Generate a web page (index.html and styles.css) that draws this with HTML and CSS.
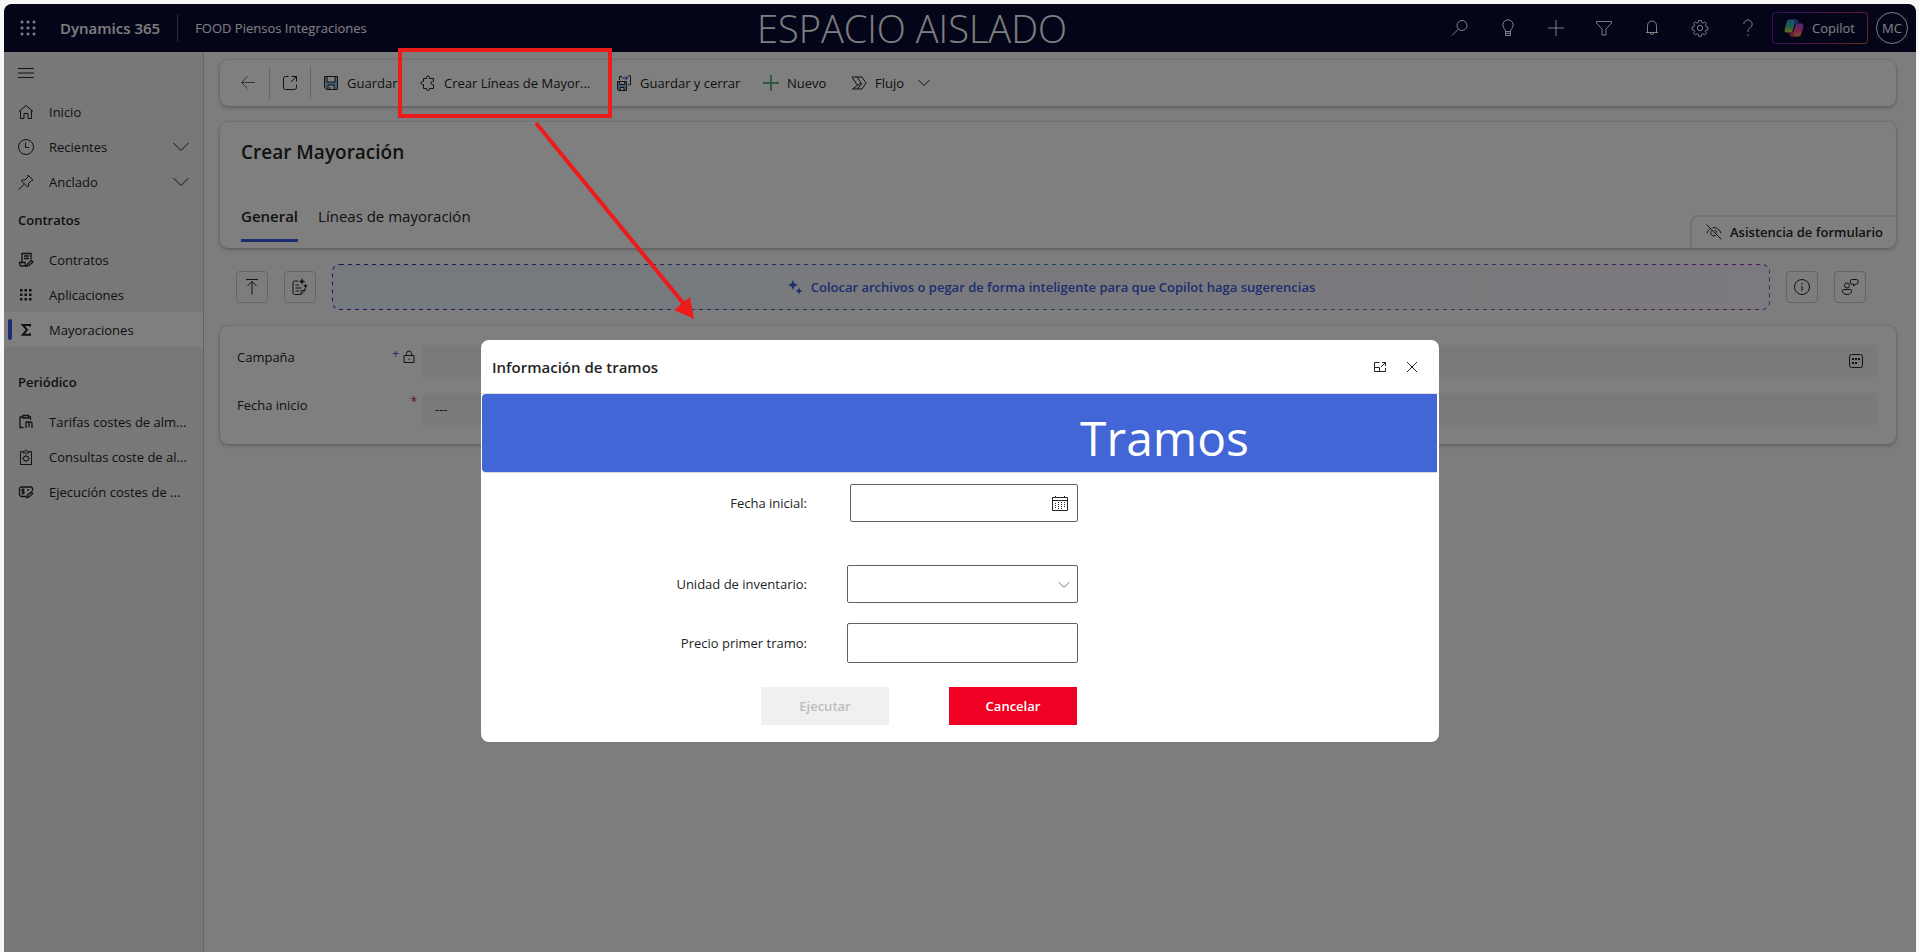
FILE: index.html
```html
<!DOCTYPE html>
<html lang="es">

<head>
    <meta charset="UTF-8">
    <meta name="viewport" content="width=device-width, initial-scale=1.0">
    <title>Crear Mayoración - Dynamics 365</title>
    <link rel="stylesheet" href="styles.css">
</head>

<body>
    <div class="app">

        <header class="topbar">
            <button class="icon-btn waffle" aria-label="Aplicaciones">
                <svg width="16" height="16" viewBox="0 0 16 16" fill="currentColor">
                    <circle cx="2" cy="2" r="1.5"/><circle cx="8" cy="2" r="1.5"/><circle cx="14" cy="2" r="1.5"/>
                    <circle cx="2" cy="8" r="1.5"/><circle cx="8" cy="8" r="1.5"/><circle cx="14" cy="8" r="1.5"/>
                    <circle cx="2" cy="14" r="1.5"/><circle cx="8" cy="14" r="1.5"/><circle cx="14" cy="14" r="1.5"/>
                </svg>
            </button>
            <a href="#" class="brand">Dynamics 365</a>
            <a href="#" class="app-name">FOOD Piensos Integraciones</a>
            <span class="env-name">ESPACIO AISLADO</span>

            <div class="top-actions">
                <button class="icon-btn" aria-label="Buscar">
                    <svg width="18" height="18" viewBox="0 0 18 18"><circle cx="11" cy="6.5" r="5"/><path d="M7.3 10.2L1 16.5"/></svg>
                </button>
                <button class="icon-btn" aria-label="Sugerencias">
                    <svg width="18" height="18" viewBox="0 0 18 18"><path d="M6.5 12.5C6.5 9.5 3.8 9.3 3.8 6a5.2 5.2 0 0 1 10.4 0c0 3.3-2.7 3.5-2.7 6.5zM6.5 12.5v4h5v-4M6.5 14.3h5"/></svg>
                </button>
                <button class="icon-btn" aria-label="Nuevo">
                    <svg width="18" height="18" viewBox="0 0 18 18"><path d="M9 1v16M1 9h16"/></svg>
                </button>
                <button class="icon-btn" aria-label="Filtro">
                    <svg width="18" height="18" viewBox="0 0 18 18"><path d="M1.5 2.5h15v1.5L11 10v6H7v-6L1.5 4z"/></svg>
                </button>
                <button class="icon-btn" aria-label="Notificaciones">
                    <svg width="18" height="18" viewBox="0 0 18 18"><path d="M4.5 13.500V6.500a4.500 4.500 0 0 1 9 0v7M3 13.500h12M7.300 13.800a1.700 1.700 0 0 0 3.400 0"/></svg>
                </button>
                <button class="icon-btn" aria-label="Configuración">
                    <svg width="18" height="18" viewBox="0 0 18 18"><circle cx="9" cy="9" r="2.7"/><path d="M7.7 1.5h2.600l.4 2 1.300.6 1.800-1.200 1.700 1.700-1.200 1.800.6 1.300 2 .4v2.600l-2 .4-.6 1.300 1.200 1.800-1.700 1.700-1.800-1.200-1.300.6-.4 2H7.700l-.4-2-1.300-.6-1.800 1.200-1.700-1.700 1.200-1.800-.6-1.300-2-.4V8.100l2-.4.6-1.300-1.200-1.800 1.700-1.700L6 4.100l1.300-.6z"/></svg>
                </button>
                <button class="icon-btn" aria-label="Ayuda">
                    <svg width="18" height="18" viewBox="0 0 18 18"><path d="M4.8 5.2a4.200 4.200 0 1 1 6.600 3.400C9.800 9.800 9 10.500 9 13M9 15.300v1.700"/></svg>
                </button>
                <button class="copilot-btn">
                    <svg class="filled" width="20" height="20" viewBox="0 0 20 20">
                        <defs>
                            <linearGradient id="cpA" x1="0" y1="0" x2="0" y2="1">
                                <stop offset="0" stop-color="#3a9cf0"/><stop offset=".5" stop-color="#35c0a0"/><stop offset="1" stop-color="#f0d030"/>
                            </linearGradient>
                            <linearGradient id="cpB" x1="0" y1="0" x2="0" y2="1">
                                <stop offset="0" stop-color="#9a50e8"/><stop offset=".5" stop-color="#f04090"/><stop offset="1" stop-color="#ffa050"/>
                            </linearGradient>
                        </defs>
                        <path fill="url(#cpA)" d="M5.5 1.5h6.5L8.5 13c-.3 1-1 1.5-2 1.5H3C.8 14.5.2 12.800.7 11l2-7c.5-1.700 1.300-2.500 2.800-2.500z"/>
                        <path fill="url(#cpB)" d="M14.5 18.5H8L11.500 7c.3-1 1-1.500 2-1.500H17c2.200 0 2.800 1.700 2.300 3.500l-2 7c-.5 1.700-1.300 2.500-2.800 2.500z"/>
                        <path fill="#3a50d0" d="M9.500 1.500h2.800c1.200 0 1.800.7 2.100 1.800l.7 2.200h-1.600c-1 0-1.700.5-2 1.500z"/>
                        <path fill="#d04060" d="M10.500 18.500H7.700c-1.200 0-1.800-.7-2.100-1.800l-.7-2.200h1.600c1 0 1.700-.5 2-1.500z"/>
                    </svg>
                    Copilot
                </button>
                <button class="avatar">MC</button>
            </div>
        </header>

        <div class="body">
            <nav class="sidebar">
                <button class="icon-btn menu-btn" aria-label="Menú">
                    <svg width="16" height="10" viewBox="0 0 16 10"><path d="M0 .5h16M0 5h16M0 9.500h16"/></svg>
                </button>

                <a href="#" class="nav-item">
                    <svg width="16" height="16" viewBox="0 0 16 16"><path d="M1 7.500L8 1.500l7 6M2.500 6.500v8h3.500v-5h4v5h3.500v-8"/></svg>
                    <span>Inicio</span>
                </a>
                <a href="#" class="nav-item">
                    <svg width="16" height="16" viewBox="0 0 16 16"><circle cx="8" cy="8" r="7.500"/><path d="M7.500 3.500v5H11"/></svg>
                    <span>Recientes</span>
                    <svg class="chevron" width="16" height="10" viewBox="0 0 16 10"><path d="M.5 1l7.500 7.500L15.500 1"/></svg>
                </a>
                <a href="#" class="nav-item">
                    <svg width="16" height="16" viewBox="0 0 16 16"><path d="M10 1l5 5-1.500.5-3 3 .2 2.500-1.200 1L3.500 7l1-1.200 2.500.2 3-3zM6.500 10L.8 15.500"/></svg>
                    <span>Anclado</span>
                    <svg class="chevron" width="16" height="10" viewBox="0 0 16 10"><path d="M.5 1l7.500 7.500L15.500 1"/></svg>
                </a>

                <h2 class="nav-group">Contratos</h2>
                <a href="#" class="nav-item">
                    <svg class="medium" width="16" height="16" viewBox="0 0 16 16"><path d="M4 10V1.500h9V7.500M6 4h5M6 6.500h5M1.500 10.500h5.500c0 2 .5 3 1.500 3.500H3.500c-1.500 0-2-1-2-3.500z"/><path d="M9 14l.5-2 4-3.500 1.500 1.500-4 3.500z"/></svg>
                    <span>Contratos</span>
                </a>
                <a href="#" class="nav-item">
                    <svg class="filled" width="16" height="16" viewBox="0 0 16 16"><path d="M2 2h2.500v2.500H2zM6.500 2H9v2.500H6.500zM11 2h2.500v2.500H11zM2 6.500h2.500V9H2zM6.500 6.500H9V9H6.500zM11 6.500h2.500V9H11zM2 11h2.500v2.500H2zM6.500 11H9v2.500H6.500zM11 11h2.500v2.500H11z"/></svg>
                    <span>Aplicaciones</span>
                </a>
                <a href="#" class="nav-item selected">
                    <svg class="heavy" width="16" height="16" viewBox="0 0 16 16"><path d="M12 4.500V3H4.800L9 7.800l-4.200 5H12v-1.500"/></svg>
                    <span>Mayoraciones</span>
                </a>

                <h2 class="nav-group spaced">Periódico</h2>
                <a href="#" class="nav-item">
                    <svg class="medium" width="16" height="16" viewBox="0 0 16 16"><path d="M5 3H2v10.500h3.500M10.500 3h2v3M5 1.500h5.500v2.500H5zM8 14V7.500M8 8h4.500c1 0 1.500.7 1.500 1.500V14M11 8v5"/></svg>
                    <span>Tarifas costes de alm...</span>
                </a>
                <a href="#" class="nav-item">
                    <svg width="16" height="16" viewBox="0 0 16 16"><path d="M4.500 2.500H2.500v13h11v-13h-2M5 4V2.500h1.500L8 .8l1.500 1.700H11V4z"/><circle cx="8" cy="9.500" r="2.500"/><path d="M8 5.800V7M8 12v1.200M4.300 9.500h1.200M10.500 9.500h1.200M5.400 6.900l.8.800M9.800 11.300l.8.800M10.600 6.900l-.8.800M6.200 11.300l-.8.800"/></svg>
                    <span>Consultas coste de al...</span>
                </a>
                <a href="#" class="nav-item">
                    <svg class="medium" width="16" height="16" viewBox="0 0 16 16"><path d="M8 12.500H3.500a2 2 0 0 1-2-2V5a2 2 0 0 1 2-2h9a2 2 0 0 1 2 2v2M6.500 5.500H5c-1.500 0-1.500 2 0 2s1.500 2.200 0 2.200H3.500M5 4.500v6M9 6h2M8.800 13.500l.7-2.500 4-3 1.200 1.500-3.700 3.500z"/></svg>
                    <span>Ejecución costes de ...</span>
                </a>
            </nav>

            <main class="content">
                <div class="card toolbar">
                    <button class="tool back" aria-label="Atrás">
                        <svg width="16" height="16" viewBox="0 0 16 16"><path d="M15 7.500H1.500M7.500 1.500l-6 6 6 6"/></svg>
                    </button>
                    <button class="tool popout" aria-label="Abrir en una ventana nueva">
                        <svg width="16" height="16" viewBox="0 0 16 16"><path d="M6.500 1.500h-3a2 2 0 0 0-2 2v9a2 2 0 0 0 2 2h9a2 2 0 0 0 2-2v-3M9.500 1.500h5v5M14.500 1.500L9 7"/></svg>
                    </button>
                    <button class="tool save">
                        <svg width="16" height="16" viewBox="0 0 16 16"><path class="disk" d="M1.500 1.500h13v13h-11l-2-2z"/><path class="paper" d="M4 1.500h8v5.500H4zM5 10h6v4.500H5z"/><path d="M7 12v2"/></svg>
                        Guardar
                    </button>
                    <button class="tool lines">
                        <svg width="16" height="16" viewBox="0 0 16 16"><path d="M3.500 3.500H6.500V2.500a1.500 1.500 0 0 1 3 0v1H13.500V6.500H12.500a1.500 1.500 0 0 0 0 3h1V13.500H9.500v.5a1.500 1.500 0 0 1-3 0v-.5H3.500V9.500H2.500a1.500 1.500 0 0 1 0-3h1z"/></svg>
                        Crear Líneas de Mayor...
                    </button>
                    <button class="tool save-close">
                        <svg width="16" height="16" viewBox="0 0 16 16"><path d="M3.500 5V1.500H6M12 .8h2.500v9H12"/><path class="disk" d="M1.500 6.500h9v9H2.500l-1-1z"/><path class="paper" d="M3.500 6.500h5v3h-5zM4 12.500h4v3H4z"/><path class="arrow-blue" d="M5.500 3h6M9.500 1l2 2-2 2"/></svg>
                        Guardar y cerrar
                    </button>
                    <button class="tool new">
                        <svg class="green" width="16" height="16" viewBox="0 0 16 16"><path d="M8 0v16M0 8h16"/></svg>
                        Nuevo
                    </button>
                    <button class="tool flow">
                        <svg width="16" height="16" viewBox="0 0 16 16"><path d="M1 2h10l4 6-4 6H1.500L10 8 6 2M1 2l5.500 8.500M6.500 14l4.500-6"/></svg>
                        Flujo
                        <svg class="thin" width="12" height="8" viewBox="0 0 12 8"><path d="M.5 1L6 6.500 11.500 1"/></svg>
                    </button>
                </div>

                <section class="card form-header">
                    <h1>Crear Mayoración</h1>
                    <div class="tabs">
                        <button class="tab active">General</button>
                        <button class="tab">Líneas de mayoración</button>
                    </div>
                    <button class="assist">
                        <svg width="16" height="16" viewBox="0 0 16 16"><path d="M.5.5l15 15M1 9.500c.5-2.500 1.800-4 3.500-5M6.500 3.700c4-.6 7.500 1.800 8.500 5.800M6 6.500a3 3 0 1 0 4.200 4.200M8.500 6.200a3 3 0 0 1 2.400 2.600"/></svg>
                        Asistencia de formulario
                    </button>
                </section>

                <div class="copilot-row">
                    <button class="square-btn" aria-label="Subir">
                        <svg width="16" height="18" viewBox="0 0 16 18"><path d="M2 1.500h12M8 16.500v-13M3.500 8L8 3.500 12.500 8"/></svg>
                    </button>
                    <button class="square-btn" aria-label="Rellenar con Copilot">
                        <svg width="18" height="18" viewBox="0 0 18 18"><path d="M7 3H3.500c-.7 0-1.500.5-1.500 1.300v11c0 .7.7 1.200 1.500 1.200H10l4-4V10M10 16.500V12.500h4M4.500 7H8M4.500 10h6M4.500 13H8"/><path class="solid" d="M11 0l.9 2.600 2.600.9-2.600.9L11 7l-.9-2.600-2.600-.9 2.600-.9zM14.500 5.500l.8 1.700 1.700.8-1.700.8-.8 1.700-.8-1.700L12 8l1.700-.8z"/></svg>
                    </button>
                    <button class="drop-zone">
                        <svg class="drop-border" aria-hidden="true">
                            <defs>
                                <linearGradient id="dashes" x1="0" x2="1">
                                    <stop offset="0" stop-color="#5a20c0"/><stop offset=".25" stop-color="#4058c8"/><stop offset=".55" stop-color="#3a90c0"/><stop offset=".75" stop-color="#6078c8"/><stop offset="1" stop-color="#a030c0"/>
                                </linearGradient>
                            </defs>
                            <rect width="100%" height="100%" rx="8" stroke="url(#dashes)"/>
                        </svg>
                        <svg class="filled" width="16" height="16" viewBox="0 0 16 16"><path d="M6 1l1.500 3.500L11 6 7.500 7.500 6 11 4.500 7.500 1 6l3.500-1.500zM12 8.500l1.100 2.400 2.400 1.100-2.400 1.100L12 15.500l-1.100-2.400L8.500 12l2.400-1.100z"/></svg>
                        Colocar archivos o pegar de forma inteligente para que Copilot haga sugerencias
                    </button>
                    <button class="square-btn" aria-label="Información">
                        <svg width="18" height="18" viewBox="0 0 18 18"><circle cx="9" cy="9" r="7.500"/><path d="M9 8v5M9 5v1.500"/></svg>
                    </button>
                    <button class="square-btn" aria-label="Comentarios">
                        <svg width="18" height="18" viewBox="0 0 18 18"><circle cx="6" cy="7.500" r="2.500"/><path d="M2.500 11.500h7.200c.6 0 1 .4 1 1 0 2.500-2 4-4.700 4s-4.700-1.500-4.700-4c0-.6.500-1 1.200-1zM10.500 1.500h5c.8 0 1.500.5 1.500 1.300v2c0 .8-.6 1.200-1.500 1.200H15l-2.500 2V6h-2c-.6 0-1.200-.5-1.200-1.200v-2c0-.8.500-1.300 1.200-1.300z"/></svg>
                    </button>
                </div>

                <section class="card form-body">
                    <div class="field">
                        <label for="campana">Campaña</label>
                        <span class="mark recommended">+</span>
                        <svg width="12" height="14" viewBox="0 0 12 14"><path d="M1 5.500h10v7H1zM3.500 5.500V3.500a2.500 2.500 0 0 1 5 0v2M6 8.500v1.500"/></svg>
                        <div class="value">
                            <input id="campana" type="text" readonly>
                            <svg width="14" height="14" viewBox="0 0 14 14"><rect x=".5" y=".5" width="13" height="13" rx="2"/><path class="solid" d="M3 4h2v2H3zM6 4h2v2H6zM9 4h2v2H9zM3 8h2v2H3zM6 8h2v2H6z"/></svg>
                        </div>
                    </div>
                    <div class="field">
                        <label for="fechaInicio">Fecha inicio</label>
                        <span class="mark required">*</span>
                        <div class="value">
                            <input id="fechaInicio" type="text" placeholder="---">
                        </div>
                    </div>
                </section>
            </main>
        </div>

        <div class="overlay">
            <div class="dialog" role="dialog" aria-labelledby="dialogTitle">
                <div class="dialog-header">
                    <h2 id="dialogTitle">Información de tramos</h2>
                    <button class="icon-btn" aria-label="Expandir">
                        <svg width="14" height="12" viewBox="0 0 14 12"><path d="M6.500 1.500h-5v9h11V7M1.500 6.500h5v4M9 1.500h3.500V5M12.500 1.500L8 6"/></svg>
                    </button>
                    <button class="icon-btn" aria-label="Cerrar">
                        <svg width="12" height="12" viewBox="0 0 12 12"><path d="M1 1l10 10M11 1L1 11"/></svg>
                    </button>
                </div>
                <div class="banner">Tramos</div>
                <form class="dialog-form">
                    <div class="form-row date-row">
                        <label for="fechaInicial">Fecha inicial:</label>
                        <div class="control date">
                            <input id="fechaInicial" type="text">
                            <svg width="18" height="18" viewBox="0 0 18 18"><path d="M1.500 2.500h15v13h-15zM1.500 5.500h15M4.500 1v2M13.500 1v2"/><path class="dots" d="M4.500 8v6M7.500 7v7M10.500 7v7M13.500 7v5"/></svg>
                        </div>
                    </div>
                    <div class="form-row unit-row">
                        <label for="unidad">Unidad de inventario:</label>
                        <div class="control">
                            <select id="unidad"><option></option></select>
                            <svg class="grey" width="12" height="8" viewBox="0 0 12 8"><path d="M.5 1L6 6.500 11.500 1"/></svg>
                        </div>
                    </div>
                    <div class="form-row">
                        <label for="precio">Precio primer tramo:</label>
                        <div class="control price">
                            <input id="precio" type="text">
                        </div>
                    </div>
                    <div class="buttons">
                        <button type="button" class="run" disabled>Ejecutar</button>
                        <button type="button" class="cancel">Cancelar</button>
                    </div>
                </form>
            </div>
        </div>
    </div>

    <!-- callout: toolbar command opens the dialog -->
    <div class="highlight"></div>
    <svg class="arrow" width="170" height="205" viewBox="0 0 170 205">
        <path d="M4 3L152 184" stroke="#ec1c1c" stroke-width="4"/>
        <path d="M162 199l-20-9 16-13z" fill="#ec1c1c"/>
    </svg>
</body>

</html>
```

FILE: styles.css
```css
* {
    box-sizing: border-box;
}

body {
    margin: 0;
    padding: 4px 3px 0 4px;
    height: 100vh;
    background-color: #f7f7f7;
    font-family: "Open Sans", "Noto Sans", sans-serif;
    font-size: 13px;
    line-height: 20px;
    color: #242424;
    overflow: hidden;
}

button,
input,
select {
    font: inherit;
    color: inherit;
    background: none;
    border: none;
    padding: 0;
    margin: 0;
}

button {
    cursor: pointer;
}

a {
    color: inherit;
    text-decoration: none;
}

h1,
h2 {
    margin: 0;
}

svg {
    flex: none;
    fill: none;
    stroke: currentColor;
    stroke-width: 1;
}

svg.filled,
.solid {
    fill: currentColor;
    stroke: none;
}

svg.medium {
    stroke-width: 1.3;
}

svg.heavy {
    stroke-width: 2;
}

.app {
    position: relative;
    display: flex;
    flex-direction: column;
    height: 100%;
}

.icon-btn {
    display: flex;
    align-items: center;
    justify-content: center;
}

/* top bar */
.topbar {
    display: flex;
    align-items: center;
    height: 48px;
    flex: none;
    position: relative;
    padding-right: 8px;
    border-radius: 8px 8px 0 0;
    background-color: #0b0b34;
    color: #fff;
}

.waffle {
    width: 48px;
    height: 48px;
}

.waffle svg {
    fill: currentColor;
    stroke: none;
}

.brand {
    padding: 4px 17px 4px 8px;
    border-right: 1px solid #56567a;
    font-size: 15px;
    font-weight: 600;
}

.app-name {
    padding-left: 17px;
}

.env-name {
    position: absolute;
    left: 50%;
    transform: translateX(-50%);
    margin-left: -48px;
    font-size: 38px;
    font-weight: 300;
    line-height: 48px;
    white-space: nowrap;
}

.top-actions {
    display: flex;
    align-items: center;
    margin-left: auto;
}

.top-actions .icon-btn {
    width: 48px;
    height: 48px;
}

.copilot-btn {
    display: flex;
    align-items: center;
    gap: 8px;
    height: 32px;
    width: 96px;
    padding-left: 11px;
    border: 1px solid transparent;
    border-radius: 4px;
    background: linear-gradient(#0b0b34, #0b0b34) padding-box,
        linear-gradient(120deg, #6a18d0, #b01888 60%, #c07020) border-box;
}

.avatar {
    width: 32px;
    height: 32px;
    margin-left: 8px;
    border: 1px solid #fff;
    border-radius: 50%;
}

/* side navigation */
.body {
    flex: 1;
    display: flex;
    background-color: #fafafa;
}

.sidebar {
    width: 200px;
    flex: none;
    background-color: #f0f0f0;
    border-right: 1px solid #c8c8c8;
}

.menu-btn {
    height: 42px;
    padding-left: 14px;
}

.nav-item {
    display: flex;
    align-items: center;
    gap: 15px;
    height: 35px;
    padding: 0 14px;
    white-space: nowrap;
}

.nav-item.selected {
    position: relative;
    background-color: #fff;
}

.nav-item.selected::before {
    content: "";
    position: absolute;
    left: 4px;
    top: 7px;
    width: 4px;
    height: 21px;
    border-radius: 2px;
    background-color: #3b5bdb;
}

.chevron {
    margin-left: auto;
}

.nav-group {
    height: 43px;
    padding-left: 14px;
    font-size: 13px;
    font-weight: 600;
    line-height: 43px;
}

.nav-group.spaced {
    margin-top: 14px;
}

/* main area */
.content {
    flex: 1;
    padding: 8px 20px 0 16px;
}

.card {
    background-color: #fff;
    border-radius: 8px;
    box-shadow: 0 0 2px rgba(0, 0, 0, 0.24), 0 2px 4px rgba(0, 0, 0, 0.2);
}

.toolbar {
    display: flex;
    align-items: center;
    height: 46px;
    padding-left: 8px;
}

.tool {
    display: flex;
    align-items: center;
    gap: 8px;
    height: 32px;
    padding: 0 12px;
    white-space: nowrap;
}

.tool.back,
.tool.popout {
    width: 41px;
    border-right: 1px solid #c8c8c8;
}

.tool.back {
    width: 42px;
    color: #666;
}

.tool.save {
    width: 97px;
}

.tool.lines {
    width: 196px;
}

.tool.save-close {
    width: 147px;
}

.tool.new {
    width: 88px;
}

.tool.flow .thin {
    margin-left: 6px;
}

.disk {
    fill: #88bce8;
}

.paper {
    fill: #fff;
}

.green {
    color: #30a060;
    stroke-width: 1.5;
}

.arrow-blue {
    stroke: #3040c0;
}

.form-header {
    position: relative;
    display: flex;
    flex-direction: column;
    justify-content: space-between;
    height: 126px;
    margin-top: 16px;
    padding: 18px 21px 6px;
}

.form-header h1 {
    font-size: 19px;
    font-weight: 600;
    line-height: 24px;
}

.tabs {
    display: flex;
    gap: 20px;
}

.tab {
    padding: 7px 0 12px;
    font-size: 15px;
    line-height: 22px;
    border-bottom: 3px solid transparent;
}

.tab.active {
    font-weight: 600;
    border-color: #3b5bdb;
}

.assist {
    position: absolute;
    right: 0;
    bottom: 0;
    display: flex;
    align-items: center;
    gap: 8px;
    height: 33px;
    padding: 0 13px 2px 14px;
    border: 1px solid #e4e4e4;
    border-width: 2px 0 0 2px;
    border-top-left-radius: 8px;
    font-weight: 600;
}

.copilot-row {
    display: flex;
    align-items: center;
    gap: 16px;
    padding: 16px 30px 16px 16px;
}

.square-btn {
    display: flex;
    align-items: center;
    justify-content: center;
    width: 32px;
    height: 32px;
    border: 1px solid #c8c8c8;
    border-radius: 4px;
}

.drop-zone {
    position: relative;
    flex: 1;
    display: flex;
    align-items: center;
    justify-content: center;
    gap: 8px;
    height: 46px;
    border-radius: 8px;
    background: linear-gradient(90deg, #e8f4fa, #f2f4fc 40%, #f8f2fa 80%, #f6f4fc);
    color: #3b5bdb;
    font-weight: 600;
}

.drop-border {
    position: absolute;
    inset: 0;
    width: 100%;
    height: 100%;
    border-radius: 8px;
    stroke-width: 2;
    stroke-dasharray: 4 4;
}

.form-body {
    display: flex;
    flex-direction: column;
    gap: 16px;
    padding: 19px 19px 19px 17px;
}

.field {
    display: flex;
    gap: 4px;
}

.field label {
    flex: 1;
    line-height: 24px;
}

.mark {
    font-size: 12px;
    line-height: 18px;
}

.recommended {
    color: #3b5bdb;
}

.required {
    color: #c4122f;
}

.field > svg {
    margin: 5px 2px 0 0;
}

.value {
    display: flex;
    align-items: center;
    width: calc(100% - 184px);
    height: 32px;
    padding: 0 14px;
    border-radius: 4px;
    background-color: #f4f4f4;
}

.value input {
    flex: 1;
    min-width: 0;
}

.value input::placeholder {
    color: #242424;
}

/* dialog */
.overlay {
    position: absolute;
    inset: 0;
    display: flex;
    justify-content: center;
    align-items: flex-start;
    padding-top: 336px;
    border-radius: 8px 8px 0 0;
    background-color: rgba(0, 0, 0, 0.5);
}

.dialog {
    width: 100%;
    max-width: 958px;
    border-radius: 8px;
    background-color: #fff;
}

.dialog-header {
    display: flex;
    align-items: center;
    height: 54px;
    padding: 0 11px;
    border-bottom: 1px solid #e0e0e0;
}

.dialog-header h2 {
    flex: 1;
    font-size: 15px;
    font-weight: 600;
}

.dialog-header .icon-btn {
    width: 32px;
    height: 32px;
}

.banner {
    margin: 0 2px 0 1px;
    height: 78px;
    padding: 6px 188px 0 0;
    border-radius: 4px 0 0 4px;
    box-shadow: 0 1px 1px #d8d8d8;
    background-color: #4266d6;
    color: #fff;
    font-size: 48px;
    line-height: 76px;
    text-align: right;
}

.dialog-form {
    padding: 12px 0 17px;
}

.form-row {
    display: flex;
    align-items: center;
    gap: 40px;
    margin-bottom: 20px;
}

.form-row label {
    width: 326px;
    text-align: right;
}

.date-row {
    gap: 43px;
    margin-bottom: 43px;
}

.control {
    position: relative;
    width: 231px;
    height: 38px;
}

.control.date {
    width: 228px;
}

.control.price {
    height: 40px;
}

.control input,
.control select {
    width: 100%;
    height: 100%;
    padding: 0 10px;
    border: 1px solid #616161;
    border-radius: 2px;
    background-color: #fff;
    appearance: none;
}

.control svg {
    position: absolute;
    right: 9px;
    top: 11px;
}

.control .grey {
    top: 16px;
    right: 8px;
    color: #777;
}

.dots {
    stroke-dasharray: 1 1;
}

.buttons {
    display: flex;
    gap: 60px;
    padding: 4px 0 0 280px;
}

.buttons button {
    width: 128px;
    height: 38px;
    font-weight: 600;
}

.run {
    background-color: #f0f0f0;
    color: #bdbdbd;
}

.cancel {
    background-color: #f00023;
    color: #fff;
}

/* callout */
.highlight {
    position: absolute;
    left: 398px;
    top: 48px;
    width: 214px;
    height: 70px;
    border: 4px solid #ec1c1c;
}

.arrow {
    position: absolute;
    left: 532px;
    top: 120px;
    stroke: none;
}
```
